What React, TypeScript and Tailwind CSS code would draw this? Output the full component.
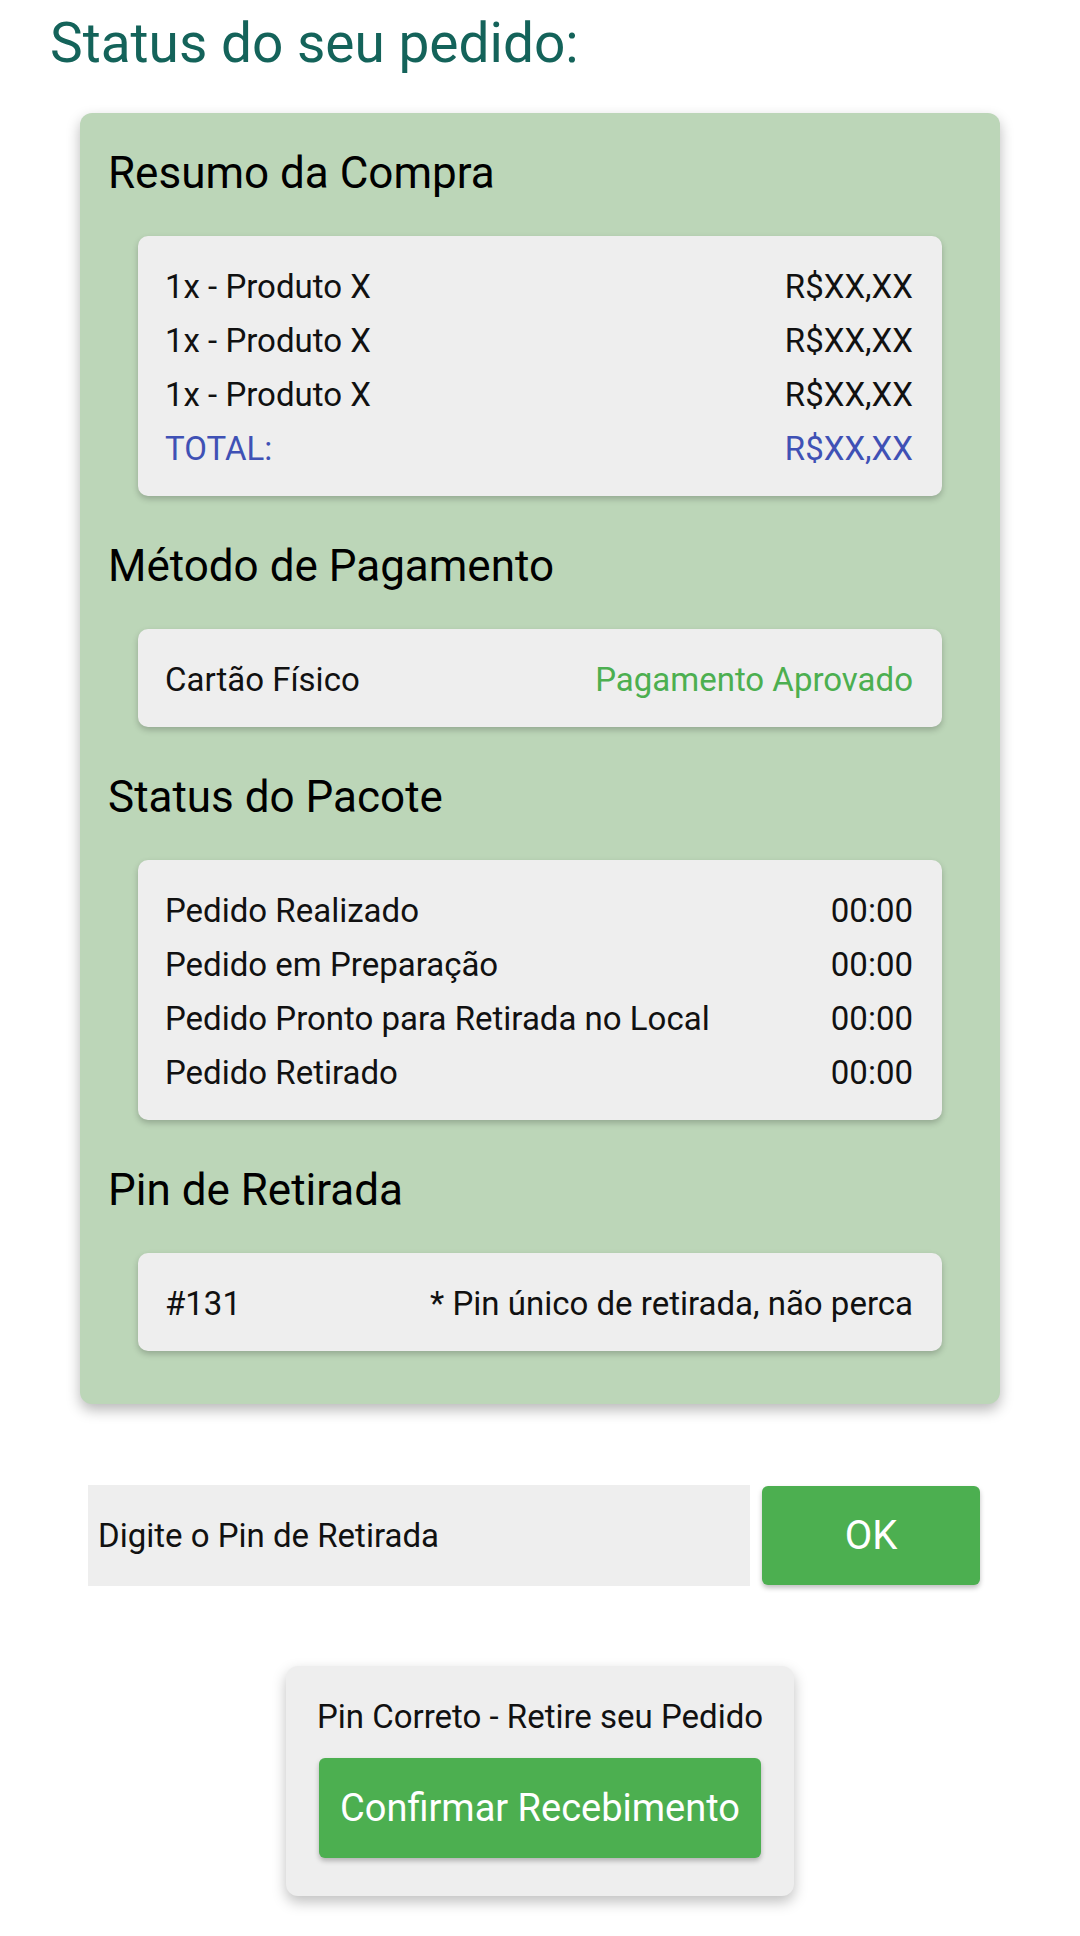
import React from 'react'

const rowsCompra = [
  { left: '1x - Produto X', right: 'R$XX,XX' },
  { left: '1x - Produto X', right: 'R$XX,XX' },
  { left: '1x - Produto X', right: 'R$XX,XX' },
]

const rowsStatus = [
  { left: 'Pedido Realizado', right: '00:00' },
  { left: 'Pedido em Preparação', right: '00:00' },
  { left: 'Pedido Pronto para Retirada no Local', right: '00:00' },
  { left: 'Pedido Retirado', right: '00:00' },
]

const Heading = ({ children, first }: { children: React.ReactNode; first?: boolean }) => (
  <h2 className={`${first ? '' : 'mt-[46px]'} text-[44px] leading-[48px] text-black`}>{children}</h2>
)

const InnerCard = ({ children }: { children: React.ReactNode }) => (
  <div className="mt-[39px] mx-[30px] bg-[#eeeeee] rounded-[10px] pl-[27px] pr-[29px] pt-6 pb-5 shadow-[0_3px_6px_rgba(0,0,0,0.22)] text-[33px] leading-[54px] text-[#111]">
    {children}
  </div>
)

export default function App() {
  return (
    <div className="w-[1080px] min-h-[1936px] bg-white font-['Roboto',sans-serif] overflow-hidden">
      {/* Title */}
      <h1 className="pl-[50px] pt-[11px] text-[55px] leading-[64px] text-[#14635a]">Status do seu pedido:</h1>

      {/* Green summary card */}
      <div className="mt-[38px] mx-[80px] bg-[#bcd6b8] rounded-[12px] pt-[36px] px-[28px] pb-[53px] shadow-[0_6px_14px_rgba(0,0,0,0.28)]">
        <Heading first>Resumo da Compra</Heading>
        <InnerCard>
          {rowsCompra.map((r, i) => (
            <div key={i} className="flex justify-between">
              <span>{r.left}</span>
              <span>{r.right}</span>
            </div>
          ))}
          <div className="flex justify-between text-[#3f51b5]">
            <span>TOTAL:</span>
            <span>R$XX,XX</span>
          </div>
        </InnerCard>

        <Heading>Método de Pagamento</Heading>
        <InnerCard>
          <div className="flex justify-between">
            <span>Cartão Físico</span>
            <span className="text-[#4caf50]">Pagamento Aprovado</span>
          </div>
        </InnerCard>

        <Heading>Status do Pacote</Heading>
        <InnerCard>
          {rowsStatus.map((r, i) => (
            <div key={i} className="flex justify-between">
              <span>{r.left}</span>
              <span>{r.right}</span>
            </div>
          ))}
        </InnerCard>

        <Heading>Pin de Retirada</Heading>
        <InnerCard>
          <div className="flex justify-between">
            <span>#131</span>
            <span>* Pin único de retirada, não perca</span>
          </div>
        </InnerCard>
      </div>

      {/* Pin input */}
      <div className="mt-[81px] ml-[88px] flex items-start gap-[12px]">
        <div className="w-[662px] h-[101px] bg-[#eeeeee] pl-[10px] flex items-center text-[33px] text-[#111]">
          Digite o Pin de Retirada
        </div>
        <button className="mt-[1px] w-[218px] h-[99px] rounded-[6px] bg-[#4caf50] text-white text-[40px] shadow-[0_3px_5px_rgba(0,0,0,0.25)]">
          OK
        </button>
      </div>

      {/* Confirmation */}
      <div className="mt-[80px] flex justify-center">
        <div className="w-[508px] bg-[#eeeeee] rounded-[12px] pt-[31px] pb-[38px] px-[33px] flex flex-col items-center shadow-[0_6px_14px_rgba(0,0,0,0.25)]">
          <p className="text-[33px] leading-[40px] text-[#111] whitespace-nowrap">Pin Correto - Retire seu Pedido</p>
          <button className="mt-[21px] w-full h-[100px] rounded-[6px] bg-[#4caf50] text-white text-[38px] whitespace-nowrap shadow-[0_3px_5px_rgba(0,0,0,0.25)]">
            Confirmar Recebimento
          </button>
        </div>
      </div>
    </div>
  )
}
